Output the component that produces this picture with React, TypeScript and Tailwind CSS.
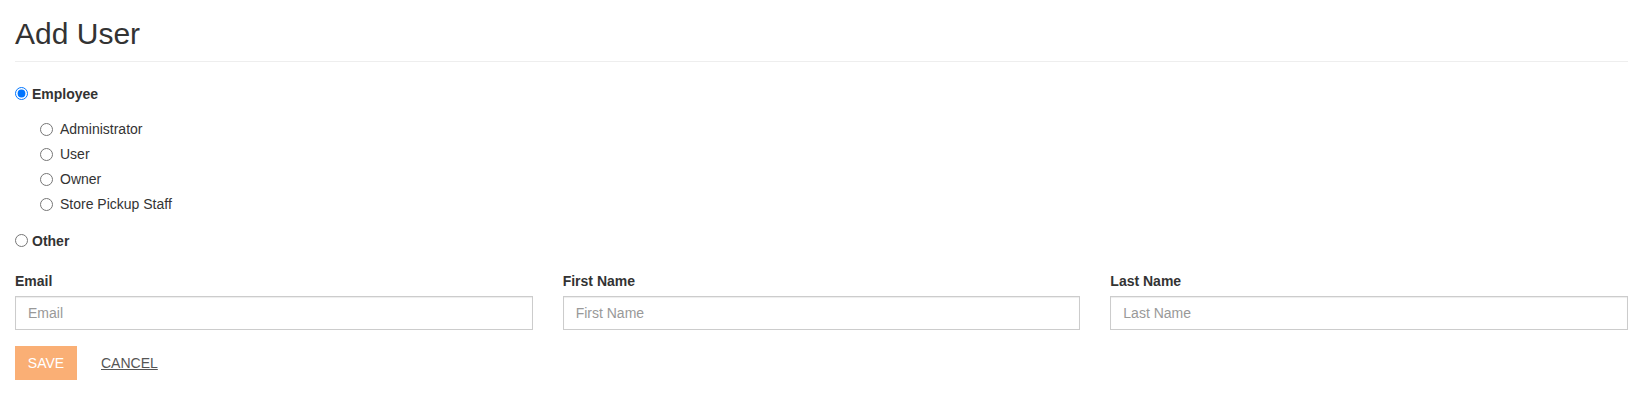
import React from "react";

const roles = ["Administrator", "User", "Owner", "Store Pickup Staff"];

const Field = ({ label }: { label: string }) => (
  <div className="flex flex-col">
    <label className="font-bold leading-[20px] mb-[5px]">{label}</label>
    <input
      type="text"
      placeholder={label}
      className="h-[34px] w-full border border-[#ccc] px-[12px] text-[14px] text-[#555] placeholder:text-[#999] shadow-[inset_0_1px_1px_rgba(0,0,0,0.075)] outline-none"
    />
  </div>
);

const App = () => {
  return (
    <div
      className="bg-white w-full h-[408px] pl-[15px] pr-[9px] text-[14px] text-[#333]"
      style={{ fontFamily: '"Liberation Sans", Arial, sans-serif' }}
    >
      <h1 className="pt-[17px] pb-[11px] text-[30px] leading-[33px] font-normal border-b border-[#eee]">
        Add User
      </h1>

      <label className="mt-[22px] flex items-start gap-[4px] leading-[20px] font-bold">
        <input type="radio" name="kind" defaultChecked className="m-0 mt-[3px] w-[13px] h-[13px]" />
        Employee
      </label>

      <div className="mt-[15px] flex flex-col gap-[5px] pl-[25px]">
        {roles.map((r) => (
          <label key={r} className="flex items-start gap-[7px] leading-[20px]">
            <input type="radio" name="role" className="m-0 mt-[4px] w-[13px] h-[13px]" />
            {r}
          </label>
        ))}
      </div>

      <label className="mt-[17px] flex items-start gap-[4px] leading-[20px] font-bold">
        <input type="radio" name="kind" className="m-0 mt-[3px] w-[13px] h-[13px]" />
        Other
      </label>

      <div className="mt-[20px] grid grid-cols-3 gap-x-[30px]">
        <Field label="Email" />
        <Field label="First Name" />
        <Field label="Last Name" />
      </div>

      <div className="mt-[16px] flex items-center">
        <button className="w-[62px] h-[34px] bg-[#faaf75] text-white text-[14px] uppercase">
          Save
        </button>
        <a href="#" className="ml-[24px] text-[#555] underline uppercase leading-[20px]">
          Cancel
        </a>
      </div>
    </div>
  );
};

export default App;
